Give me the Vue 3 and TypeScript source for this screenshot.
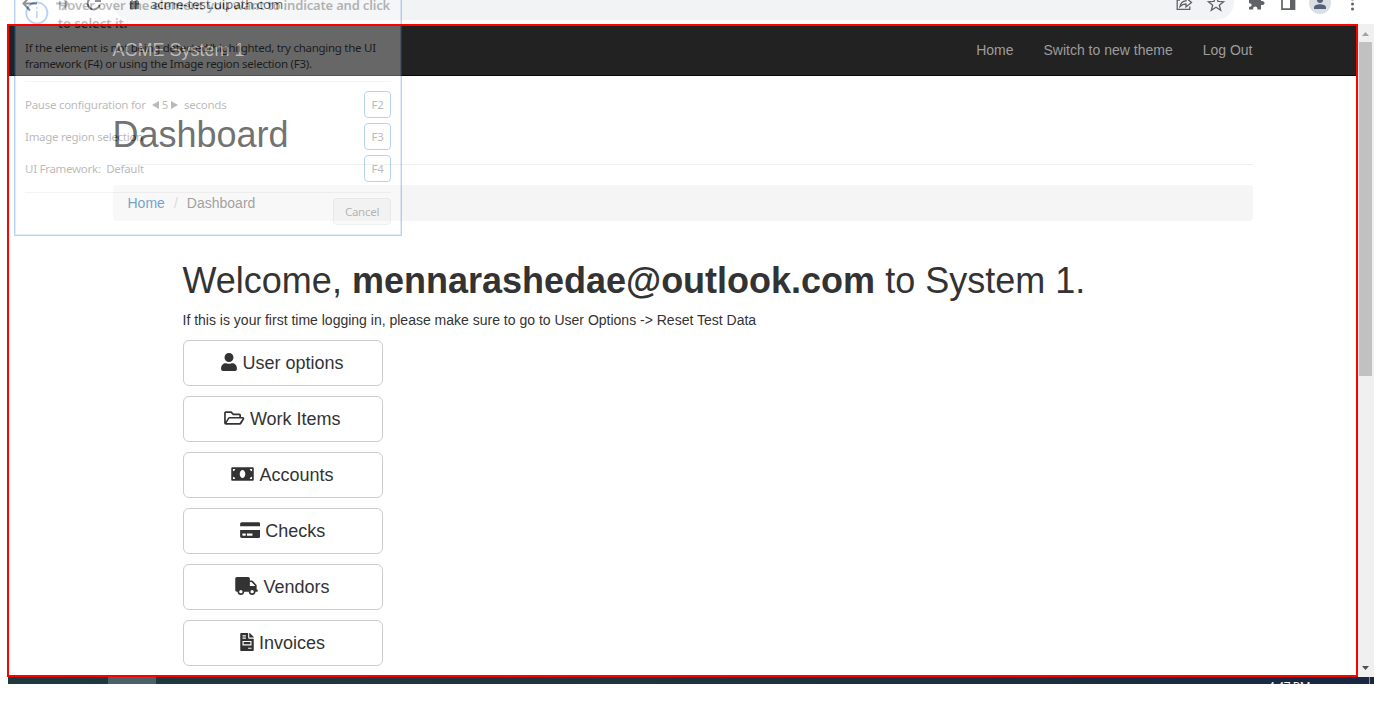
<script setup lang="ts">
interface Shortcut {
  label: string
  key: string
}
interface MenuButton {
  label: string
  width: number
  viewBox: string
  path: string
}

const navLinks: string[] = ['Home', 'Switch to new theme', 'Log Out']

const buttons: MenuButton[] = [
  {
    label: 'User options',
    width: 16,
    viewBox: '0 0 448 512',
    path: 'M224 256c70.7 0 128-57.3 128-128S294.700 0 224 0 96 57.300 96 128s57.300 128 128 128zm90 32h-17c-22 10-47 16-73 16s-50-6-73-16h-17C60 288 0 348 0 422v42c0 26 22 48 48 48h352c26 0 48-22 48-48v-42c0-74-60-134-134-134z',
  },
  {
    label: 'Work Items',
    width: 20.500,
    viewBox: '0 0 576 512',
    path: 'M528 224H480v-48c0-26-22-48-48-48H272l-64-64H48C22 64 0 86 0 112v288c0 26 22 48 48 48h400c17 0 33-9 41-24l80-136c19-32-4-64-41-64zM48 118c0-3 3-6 6-6h134l64 64h174c3 0 6 3 6 6v42H152c-17 0-33 9-41 24L48 355zm394 282H72l77-128h379z',
  },
  {
    label: 'Accounts',
    width: 23,
    viewBox: '0 0 640 512',
    path: 'M608 64H32C14 64 0 78 0 96v320c0 18 14 32 32 32h576c18 0 32-14 32-32V96c0-18-14-32-32-32zM48 400v-64c35 0 64 29 64 64zm0-224v-64h64c0 35-29 64-64 64zm272 192c-44 0-80-50-80-112s36-112 80-112 80 50 80 112-36 112-80 112zm272 32h-64c0-35 29-64 64-64zm0-224c-35 0-64-29-64-64h64z',
  },
  {
    label: 'Checks',
    width: 20.500,
    viewBox: '0 0 576 512',
    path: 'M0 432c0 26 22 48 48 48h480c26 0 48-22 48-48V256H0zm192-68c0-7 5-12 12-12h136c7 0 12 5 12 12v40c0 7-5 12-12 12H204c-7 0-12-5-12-12zm-128 0c0-7 5-12 12-12h72c7 0 12 5 12 12v40c0 7-5 12-12 12H76c-7 0-12-5-12-12zM576 80v72H0V80c0-26 22-48 48-48h480c26 0 48 22 48 48z',
  },
  {
    label: 'Vendors',
    width: 23,
    viewBox: '0 0 640 512',
    path: 'M624 352h-16V244c0-13-5-25-14-34L494 110c-9-9-21-14-34-14h-44V48c0-26-22-48-48-48H48C22 0 0 22 0 48v320c0 26 22 48 48 48h16c0 53 43 96 96 96s96-43 96-96h128c0 53 43 96 96 96s96-43 96-96h48c9 0 16-7 16-16v-32c0-9-7-16-16-16zM160 464a48 48 0 1 1 0-96 48 48 0 0 1 0 96zm320 0a48 48 0 1 1 0-96 48 48 0 0 1 0 96zm80-208H416V144h44l100 100z',
  },
  {
    label: 'Invoices',
    width: 14,
    viewBox: '0 0 384 512',
    path: 'M288 256H96v64h192zm89-151L279 7c-4-4-11-7-17-7h-6v128h128v-6c0-6-3-12-7-17zm-153 31V0H24C11 0 0 11 0 24v464c0 13 11 24 24 24h336c13 0 24-11 24-24V160H248c-13 0-24-11-24-24zM64 64h96v32H64zm0 64h96v32H64zm256 320h-96v-32h96zm0-208v112H64V224h256z',
  },
]

const shortcuts: Shortcut[] = [
  { label: 'Pause configuration for', key: 'F2' },
  { label: 'Image region selection', key: 'F3' },
  { label: 'UI Framework:  Default', key: 'F4' },
]
</script>

<template>
  <div class="screen">
    <div class="desktop">
      <header class="chrome">
        <svg class="nav-icons" width="105" height="24" viewBox="0 0 105 24">
          <g fill="none" stroke="#5f6368" stroke-width="2">
            <path d="M29 3.500H16M22-3.500l-6.500 7 6.500 7" />
            <path d="M48 3.500h12M54-3l6 6.500-6 6.500" opacity=".55" />
            <path d="M91.500 5a6 6 0 1 1-1.300-5.500M92-4v5h-5" />
          </g>
        </svg>
        <div class="address">
          <svg class="lock" width="9" height="12" viewBox="0 0 9 12">
            <path d="M0 4h9v8H0z" fill="#4d5156" />
            <path d="M2 5V2.500a2.500 2.500 0 0 1 5 0V5" fill="none" stroke="#4d5156" stroke-width="1.500" />
          </svg>
          <span class="url">acme-test.uipath.com</span>
          <svg class="address-icons" width="60" height="24" viewBox="0 0 60 24">
            <g fill="none" stroke="#5f6368" stroke-width="1.300">
              <path d="M6 0H3.200v9.300h12.600V6.500" />
              <path d="M6 6.500c.5-3.500 2.500-5.500 6-5.700v-3l5.500 4.700-5.500 4.500V4c-2.500 0-4.500.8-6 2.500z" />
              <path d="m42-4 2 5.300 5.600.4-4.300 3.500 1.400 5-4.700-2.900-4.700 2.900 1.400-5-4.300-3.500 5.600-.4z" />
            </g>
          </svg>
        </div>
        <svg class="tool-icons" width="140" height="24" viewBox="0 0 140 24">
          <path d="M15 9.500V6.700c3.500.7 3.500-4.200 0-3.500V-2h12v3c4.700-.9 4.700 4.900 0 4v4.500h-3.700c.8-4-4.900-4-4.100 0z" fill="#5f6368" />
          <path d="M48-4v13.200h12.500V-4" fill="none" stroke="#5f6368" stroke-width="1.700" />
          <path d="M56-4h5v13h-5z" fill="#5f6368" />
          <circle cx="86" cy="3" r="11" fill="#dadee5" />
          <circle cx="86" cy="0" r="3" fill="#566176" />
          <path d="M80 9V7.500c0-4.200 12-4.200 12 0V9z" fill="#566176" />
          <g fill="#5f6368"><circle cx="118.500" cy="-1" r="1.500" /><circle cx="118.500" cy="4" r="1.500" /><circle cx="118.500" cy="9" r="1.500" /></g>
        </svg>
      </header>

      <div class="viewport">
        <main class="page">
          <nav class="navbar">
            <span class="brand">ACME System 1</span>
            <ul class="links">
              <li v-for="link in navLinks" :key="link">{{ link }}</li>
            </ul>
          </nav>
          <div class="container">
            <h1 class="title">Dashboard</h1>
            <div class="breadcrumb">
              <a>Home</a><span class="slash">/</span><span>Dashboard</span>
            </div>
            <section class="content">
              <h1 class="welcome">Welcome, <b>mennarashedae@outlook.com</b> to System 1.</h1>
              <p class="hint">If this is your first time logging in, please make sure to go to User Options -&gt; Reset Test Data</p>
              <div class="menu">
                <button v-for="b in buttons" :key="b.label" class="btn" type="button">
                  <svg :width="b.width" height="18" :viewBox="b.viewBox"><path :d="b.path" fill="#333" fill-rule="evenodd" /></svg>
                  <span>{{ b.label }}</span>
                </button>
              </div>
            </section>
          </div>
        </main>
        <div class="scrollbar">
          <svg width="15" height="18" viewBox="0 0 15 18"><path d="M3 12l3.500-4 3.500 4z" fill="#a3a3a3" /></svg>
          <div class="thumb"></div>
          <svg class="down" width="15" height="18" viewBox="0 0 15 18"><path d="M3 7h7l-3.500 4z" fill="#505050" /></svg>
        </div>
      </div>

      <footer class="taskbar">
        <div class="task"></div>
        <div class="clock">4:47 PM</div>
        <div class="peek"></div>
      </footer>
    </div>

    <aside class="overlay">
      <div class="lead">
        <svg class="info" width="24" height="24" viewBox="0 0 24 24">
          <circle cx="12" cy="12" r="10.700" fill="none" stroke="#1678dc" stroke-width="1.800" />
          <path d="M12 10v7.500M12 6v2" stroke="#1678dc" stroke-width="1.500" />
        </svg>
        <p class="lead-text"><span class="line-one">Hover over the element you want to indicate and click</span><br />to select it.</p>
      </div>
      <p class="note">If the element is not being detected/highlighted, try changing the UI<br />framework (F4) or using the Image region selection (F3).</p>
      <div class="shortcuts">
        <div v-for="(s, i) in shortcuts" :key="s.key" class="row">
          <span class="row-label">
            <span>{{ s.label }}</span>
            <span v-if="i === 0" class="stepper">
              <svg width="7" height="8" viewBox="0 0 7 8"><path d="M7 0v8L0 4z" fill="#222" /></svg>
              <span>5</span>
              <svg width="7" height="8" viewBox="0 0 7 8"><path d="M0 0v8l7-4z" fill="#222" /></svg>
              <span class="seconds">seconds</span>
            </span>
          </span>
          <kbd>{{ s.key }}</kbd>
        </div>
      </div>
      <div class="cancel">Cancel</div>
    </aside>

    <div class="highlight"></div>
  </div>
</template>

<style>
body {
  margin: 0;
  background: #fff;
}
</style>

<style scoped>
.screen {
  position: relative;
  width: 1382px;
  height: 701px;
  overflow: hidden;
  background: #fff;
  color: #333;
  font: 14px/20px "Liberation Sans", Arial, sans-serif;
}
.desktop {
  margin: 0 8px;
}
.chrome {
  display: flex;
  height: 24px;
  overflow: hidden;
}
.address {
  display: flex;
  width: 1121px;
  height: 20px;
  border-radius: 0 0 18px 18px;
  background: #f1f3f4;
}
.lock {
  margin: -3px 0 0 17px;
}
.url {
  width: 135px;
  margin: -6px 0 0 11px;
  color: #202124;
  font: 13.500px/20px "Open Sans", sans-serif;
  letter-spacing: -.18px;
  white-space: nowrap;
}
.address-icons {
  margin-left: auto;
}
.tool-icons {
  flex: none;
}
.viewport {
  display: flex;
  height: 653px;
}
.page {
  width: 1350px;
  height: 653px;
  overflow: hidden;
}
.navbar {
  box-sizing: border-box;
  display: flex;
  justify-content: space-between;
  height: 52px;
  padding: 16px 105.500px 0 104.500px;
  border-bottom: 1px solid #080808;
  background: #222;
  color: #9d9d9d;
}
.brand {
  font-size: 18px;
}
.links {
  display: flex;
  gap: 30px;
  margin: 0;
  padding: 0;
  list-style: none;
}
.container {
  width: 1140px;
  margin-left: 105px;
}
h1 {
  margin: 0;
  font-weight: 400;
  font-size: 36px;
  line-height: 40px;
}
.title {
  height: 49px;
  padding-top: 39px;
  border-bottom: 1px solid #eee;
  text-indent: -.5px;
}
.breadcrumb {
  display: flex;
  box-sizing: border-box;
  height: 36px;
  margin-top: 20px;
  padding: 8px 14.500px;
  border-radius: 4px;
  background: #f5f5f5;
  color: #777;
}
.breadcrumb a {
  color: #337ab7;
}
.slash {
  width: 22px;
  text-align: center;
  color: #ccc;
}
.content {
  margin: 40px 0 0 70px;
}
.welcome {
  white-space: nowrap;
  text-indent: -.5px;
}
.hint {
  margin: 9px 0 10px;
  text-indent: -.5px;
}
.menu {
  display: flex;
  flex-direction: column;
  gap: 10px;
  width: 200px;
}
.btn {
  box-sizing: border-box;
  display: flex;
  align-items: center;
  justify-content: center;
  gap: 5px;
  height: 46px;
  padding: 0 1px 0 0;
  border: 1px solid #ccc;
  border-radius: 6px;
  background: #fff;
  color: #333;
  font: 18px/24px "Liberation Sans", Arial, sans-serif;
}
.btn svg {
  margin-top: -2px;
}
.scrollbar {
  display: flex;
  flex-direction: column;
  width: 15px;
  padding-left: 1px;
  background: #f0f0f0;
}
.thumb {
  width: 13px;
  height: 334px;
  background: #c1c1c1;
}
.down {
  margin-top: auto;
}
.taskbar {
  display: flex;
  height: 7px;
  overflow: hidden;
  background: linear-gradient(90deg, #22383f, #20343f 45%, #1a2744);
}
.task {
  width: 48px;
  margin-left: 100px;
  background: #4c6067;
}
.clock {
  width: 42px;
  margin: 3px 0 0 auto;
  color: #fff;
  font: 12px/14px "Open Sans", sans-serif;
  letter-spacing: -.4px;
  white-space: nowrap;
}
.peek {
  width: 4px;
  margin-left: 59px;
  border-left: 1px solid #8791a0;
}
.overlay {
  position: absolute;
  top: -20px;
  left: 14px;
  box-sizing: border-box;
  width: 388px;
  height: 256px;
  padding: 0 11px;
  border: 1px solid #1470cc;
  box-shadow: inset 0 0 0 1px #9cc4ec;
  background: #fff;
  opacity: .31;
  color: #222;
  font: 11.500px/16px "Noto Sans", "Open Sans", sans-serif;
  letter-spacing: -.27px;
}
.overlay p {
  margin: 0;
  white-space: nowrap;
}
.lead {
  display: flex;
  height: 59px;
}
.info {
  margin: 20px 9px 0 -1px;
}
.lead-text {
  padding-top: 15px;
  font-weight: 600;
  font-size: 13px;
  line-height: 18px;
  letter-spacing: 0;
}
.line-one {
  letter-spacing: -.18px;
}
.overlay .note {
  height: 41px;
  margin: 0 -1px;
  border-bottom: 1px solid #ddd;
  color: #111;
}
.shortcuts {
  box-sizing: border-box;
  height: 111px;
  margin: 0 -1px;
  padding-top: 9px;
  border-bottom: 1px solid #ddd;
}
.row {
  display: flex;
  align-items: center;
  justify-content: space-between;
  height: 27px;
  margin-bottom: 5px;
}
.row-label,
.stepper {
  display: flex;
  align-items: center;
  white-space: pre;
}
.stepper {
  gap: 3px;
  margin-left: 6px;
}
.seconds {
  margin-left: 3px;
}
kbd {
  box-sizing: border-box;
  width: 27px;
  height: 27px;
  border: 1px solid #1474d0;
  border-radius: 4px;
  font: 11.500px/26px "Noto Sans", sans-serif;
  text-align: center;
}
.cancel {
  box-sizing: border-box;
  width: 58px;
  height: 27px;
  margin: 5px -1px 0 auto;
  border: 1px solid #ccc;
  border-radius: 4px;
  background: #eee;
  line-height: 26px;
  text-align: center;
}
.highlight {
  position: absolute;
  top: 24px;
  left: 7px;
  box-sizing: border-box;
  width: 1351px;
  height: 653px;
  border: 2px solid #f00;
}
</style>
